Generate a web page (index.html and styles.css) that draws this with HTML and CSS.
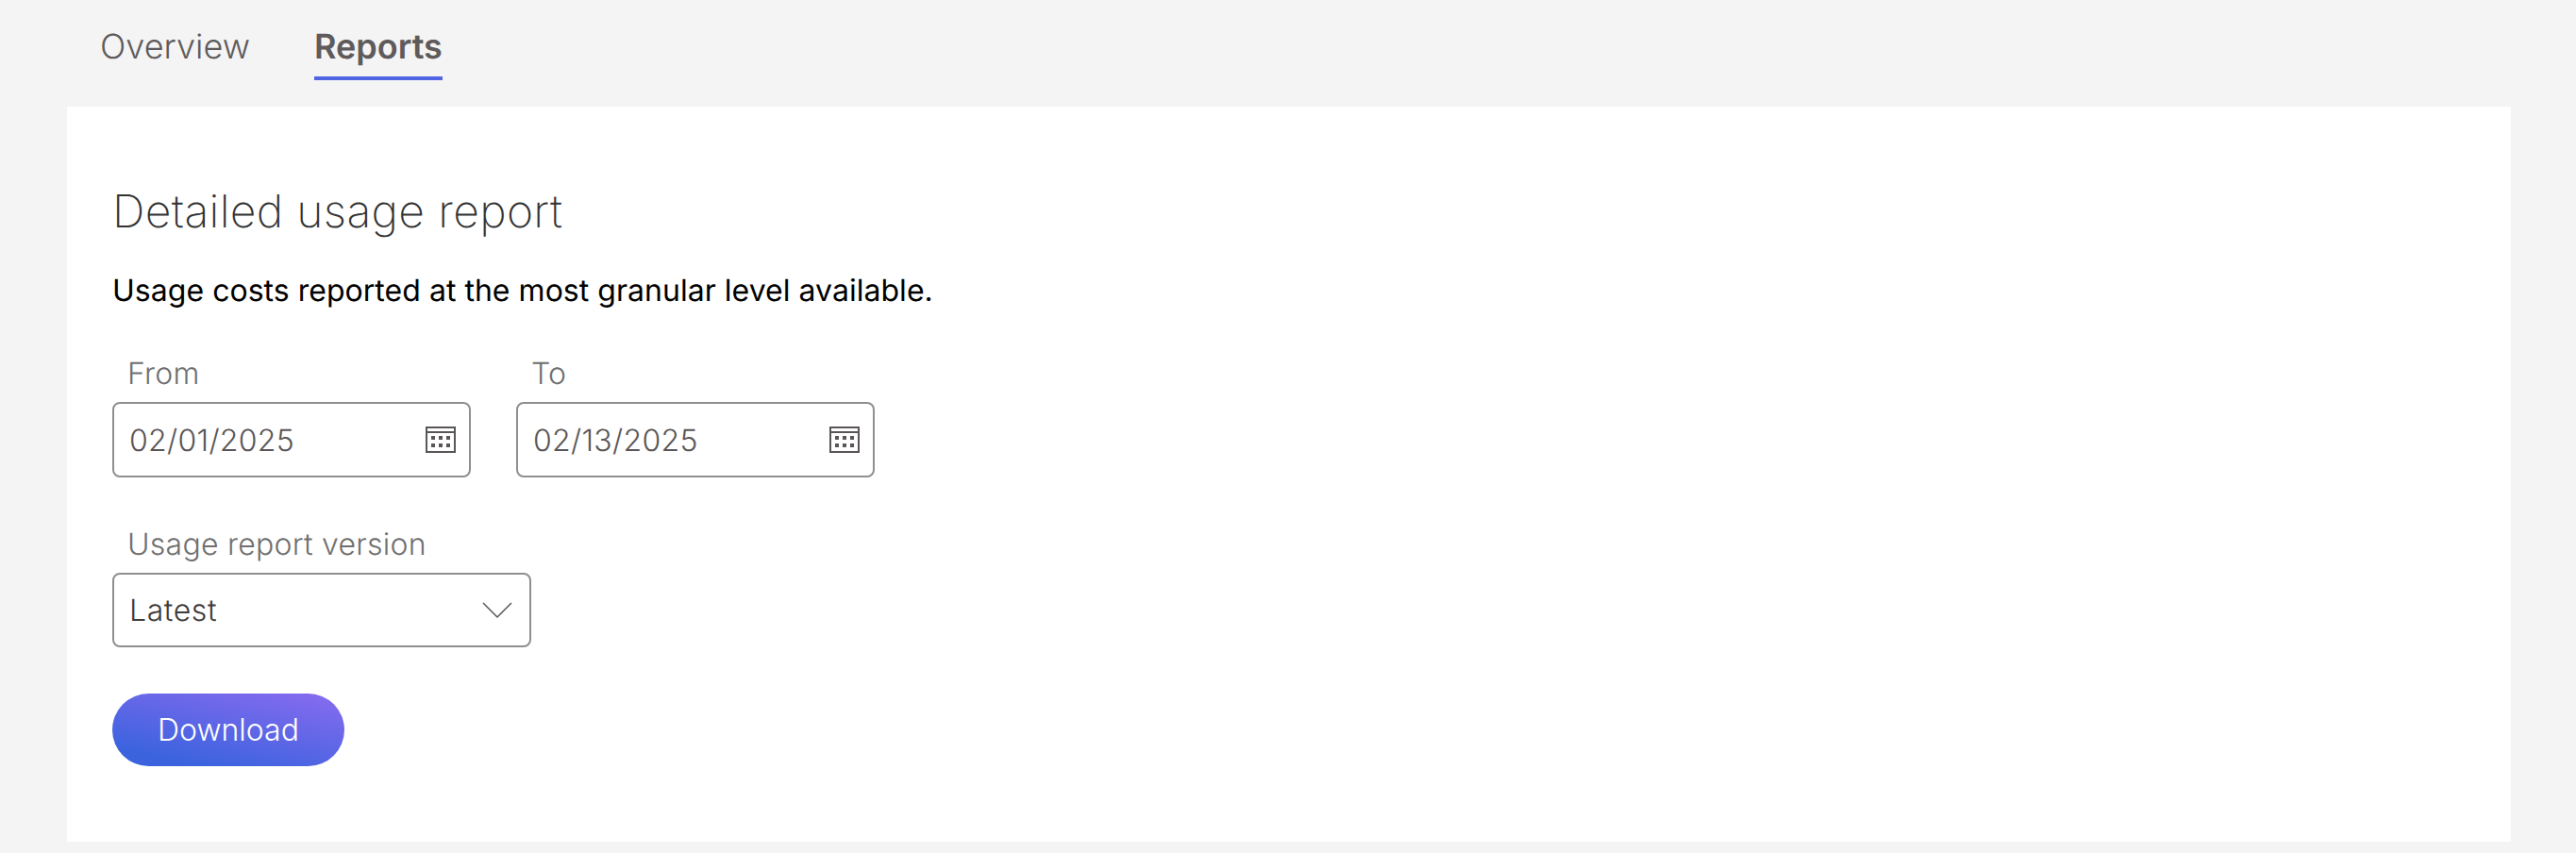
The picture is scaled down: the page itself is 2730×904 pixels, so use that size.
FILE: index.html
```html
<!DOCTYPE html>
<html lang="en">
<head>
  <meta charset="UTF-8" />
  <title>Usage reports</title>
  <link rel="stylesheet" href="styles.css">
</head>
<body>

  <!-- Tabs -->
  <div class="tabs">
    <div class="tab">Overview</div>
    <div class="tab tab-active">Reports</div>
  </div>

  <!-- Report card -->
  <div class="card">
    <h2 class="card-title">Detailed usage report</h2>
    <p class="card-text">Usage costs reported at the most granular level available.</p>

    <div class="date-row">
      <div class="field">
        <label class="field-label">From</label>
        <div class="input-box date-box">
          <span class="input-value">02/01/2025</span>
          <svg class="calendar-icon" viewBox="0 0 32 28" width="32" height="28">
            <path class="calendar-frame" d="M1 1h30v26H1zM1 6h30" />
            <path class="calendar-dots" d="M6 10h4v4H6zM14 10h4v4h-4zM22 10h4v4h-4zM6 18h4v4H6zM14 18h4v4h-4zM22 18h4v4h-4z" />
          </svg>
        </div>
      </div>
      <div class="field">
        <label class="field-label">To</label>
        <div class="input-box date-box">
          <span class="input-value">02/13/2025</span>
          <svg class="calendar-icon" viewBox="0 0 32 28" width="32" height="28">
            <path class="calendar-frame" d="M1 1h30v26H1zM1 6h30" />
            <path class="calendar-dots" d="M6 10h4v4H6zM14 10h4v4h-4zM22 10h4v4h-4zM6 18h4v4H6zM14 18h4v4h-4zM22 18h4v4h-4z" />
          </svg>
        </div>
      </div>
    </div>

    <div class="field version-field">
      <label class="field-label">Usage report version</label>
      <div class="input-box select-box">
        <span class="select-value">Latest</span>
        <svg class="chevron-icon" viewBox="0 0 32 18" width="32" height="18">
          <path d="M1 1l15 15L31 1" />
        </svg>
      </div>
    </div>

    <button class="download-button">Download</button>
  </div>

</body>
</html>
```

FILE: styles.css
```css
* {
  box-sizing: border-box;
  margin: 0;
  padding: 0;
}

body {
  font-family: 'Inter', sans-serif;
  background-color: #f4f4f4;
  height: 904px;
  overflow: hidden;
  text-rendering: geometricPrecision;
}

.tabs {
  display: flex;
  gap: 68px;
  height: 113px;
  padding: 27px 0 0 106px;
}

.tab {
  height: 58px;
  font-size: 36px;
  line-height: 44px;
  font-weight: 300;
  color: #5f5b5c;
}

.tab-active {
  font-weight: 600;
  border-bottom: 4px solid #4f65e3;
}

.card {
  width: 2590px;
  height: 779px;
  margin-left: 71px;
  padding: 82px 48px 0;
  background-color: #ffffff;
}

.card-title {
  font-size: 48px;
  line-height: 58px;
  font-weight: 200;
  letter-spacing: 0.35px;
  color: #333333;
}

.card-text {
  margin-top: 35px;
  font-size: 32px;
  line-height: 40px;
  letter-spacing: 0.03px;
  color: #000000;
}

.date-row {
  display: flex;
  gap: 48px;
  margin-top: 48px;
}

.field-label {
  display: block;
  padding-left: 16px;
  font-size: 32px;
  line-height: 40px;
  font-weight: 300;
  letter-spacing: 0.25px;
  color: #6f6f6f;
}

.input-box {
  display: flex;
  align-items: center;
  justify-content: space-between;
  margin-top: 10px;
  border: 2px solid #8f8f8f;
  border-radius: 8px;
  background-color: #ffffff;
}

.date-box {
  width: 380px;
  height: 80px;
  padding: 0 14px 0 16px;
}

.input-value {
  font-size: 32px;
  font-weight: 300;
  letter-spacing: 0.3px;
  color: #5a5657;
}

.calendar-frame {
  fill: none;
  stroke: #5a5657;
  stroke-width: 2;
}

.calendar-dots {
  fill: #5a5657;
}

.version-field {
  margin-top: 51px;
}

.select-box {
  width: 444px;
  height: 79px;
  padding: 0 18px 0 16px;
}

.select-value {
  font-size: 32px;
  font-weight: 300;
  letter-spacing: 0.6px;
  color: #3f3b3c;
}

.chevron-icon path {
  fill: none;
  stroke: #5a5657;
  stroke-width: 1.5;
}

.download-button {
  display: block;
  width: 246px;
  height: 77px;
  margin-top: 49px;
  font-family: inherit;
  font-size: 32px;
  font-weight: 300;
  color: #ffffff;
  border: none;
  border-radius: 39px;
  background: linear-gradient(12deg, #3b63de 15%, #8a6bf0 100%);
  cursor: pointer;
}
```
